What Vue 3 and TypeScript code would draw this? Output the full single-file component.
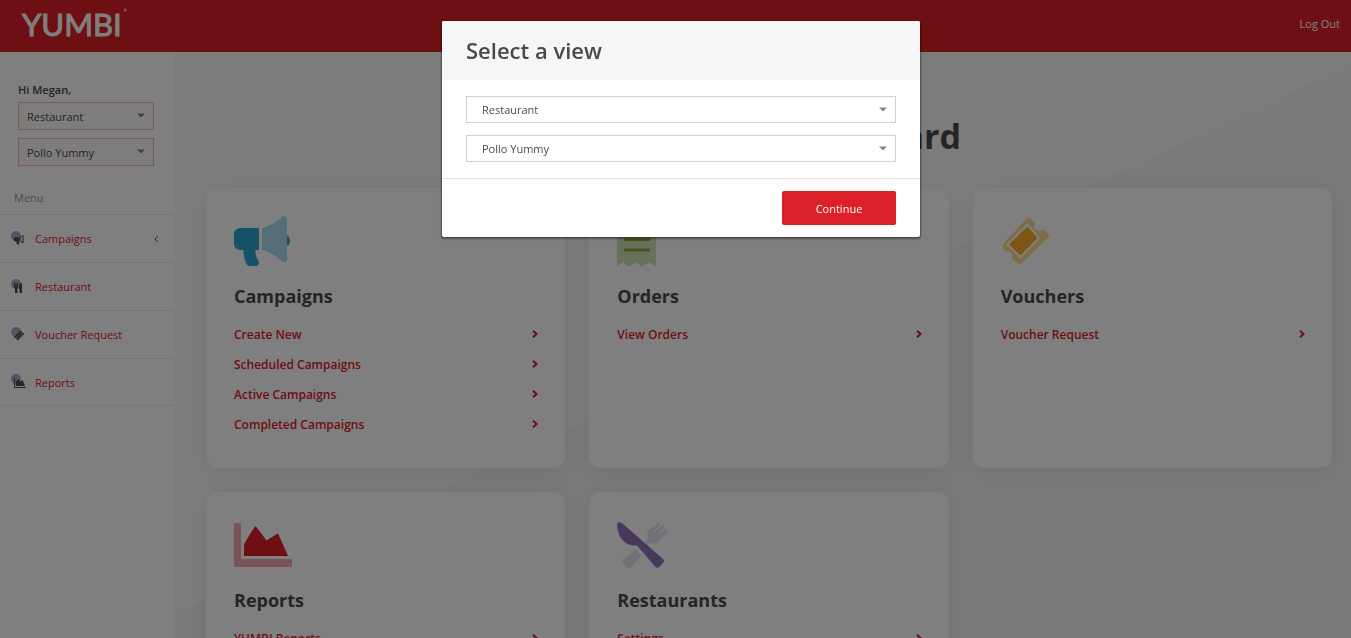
<script setup lang="ts">
import { ref } from 'vue'

interface Card {
  title: string
  icon: string
  links: string[]
}

const view = ref('Restaurant')
const store = ref('Pollo Yummy')
const open = ref(true)

const menu = [
  { label: 'Campaigns', icon: 'horn', expandable: true },
  { label: 'Restaurant', icon: 'cutlery', expandable: false },
  { label: 'Voucher Request', icon: 'ticket', expandable: false },
  { label: 'Reports', icon: 'chart', expandable: false },
]

const cards: Card[] = [
  {
    title: 'Campaigns',
    icon: 'horn',
    links: ['Create New', 'Scheduled Campaigns', 'Active Campaigns', 'Completed Campaigns'],
  },
  { title: 'Orders', icon: 'receipt', links: ['View Orders'] },
  { title: 'Vouchers', icon: 'ticket', links: ['Voucher Request'] },
  { title: 'Reports', icon: 'chart', links: ['YUMBI Reports'] },
  { title: 'Restaurants', icon: 'cutlery', links: ['Settings'] },
]
</script>

<template>
  <div class="page">
    <header class="topbar">
      <a class="logo" href="#" aria-label="YUMBI home">
        <span>YUMBI</span>
        <svg width="4" height="4" viewBox="0 0 4 4"><circle cx="2" cy="2" r="1.5" fill="#fff" fill-opacity=".6" /></svg>
      </a>
      <a class="logout" href="#">Log Out</a>
    </header>

    <div class="columns">
      <aside class="sidebar">
        <div class="profile">
          <p class="greeting">Hi Megan,</p>
          <div class="select small">
            <select v-model="view" aria-label="View">
              <option>Restaurant</option>
            </select>
            <svg class="caret" width="8" height="5" viewBox="0 0 8 5"><path d="M0 0.5h8L4 4.5z" /></svg>
          </div>
          <div class="select small">
            <select v-model="store" aria-label="Store">
              <option>Pollo Yummy</option>
            </select>
            <svg class="caret" width="8" height="5" viewBox="0 0 8 5"><path d="M0 0.5h8L4 4.5z" /></svg>
          </div>
        </div>
        <p class="menu-title">Menu</p>
        <nav class="menu">
          <a v-for="item in menu" :key="item.label" class="menu-item" href="#">
            <svg class="menu-icon" width="16" height="16" viewBox="0 0 16 16">
              <circle cx="5" cy="5" r="5" fill="#aaa4cc" />
              <g v-if="item.icon === 'horn'" fill="#4a4a4e">
                <path d="M4 6.2h4.6v4H8l.5 3H6l-.8-3H4a1 1 0 0 1-1-1v-2a1 1 0 0 1 1-1z" />
                <path d="M9 6.8l3-2.3v7.4L9 9.8z" fill="none" stroke="#4a4a4e" stroke-width="1" />
                <path d="M12.6 7.2q1.2 1 0 2z" />
              </g>
              <g v-else-if="item.icon === 'cutlery'" fill="#4a4a4e">
                <path d="M3 4h1v3h.5V4h1v3H6V4h1v4L6.400 9v5H4V9L3 8zM8 7q0-3 3-3v10H8.600v-4H8z" />
              </g>
              <g v-else-if="item.icon === 'ticket'" fill="#4a4a4e">
                <path d="M3 10l6.600-6.400 1.200 1 0 1.200 1.400.2 1 1L6.800 13.600l-1.200-1 0-1.300-1.400-.2z" />
                <path d="M5.600 10l4-4 1.600 1.500-4 4z" fill="none" stroke="#c9c4d8" stroke-width=".7" />
              </g>
              <g v-else fill="#4a4a4e">
                <path d="M3 4h1v9h11v1H3z" />
                <path d="M4.800 12V8l2.400-3 2.400 2.400 2-1.400L14 12z" />
              </g>
            </svg>
            <span>{{ item.label }}</span>
            <svg v-if="item.expandable" class="collapse" width="5" height="8" viewBox="0 0 5 8">
              <path d="M4 1L1 4l3 3" fill="none" stroke="#dc2027" />
            </svg>
          </a>
        </nav>
      </aside>

      <main class="content">
        <h1>Restaurant Dashboard</h1>
        <div class="cards">
          <section v-for="card in cards" :key="card.title" class="card">
            <svg v-if="card.icon === 'horn'" class="card-icon" width="60" height="54" viewBox="0 0 60 54">
              <path d="M52 18.500q4 1.500 4 6.500t-4 5z" fill="#2ca6d2" />
              <path d="M6 12h19v22h-3.500q-.5 6 2.500 10 2 3.500 0 5-1 1-2.500 1h-6q-2 0-3.500-2.500Q9.500 42 9.500 34H6q-6-1-6-6V18q0-5 6-6z" fill="#2ca6d2" />
              <path d="M28 12Q37 10 46 2.500 49-1 51.500.5q1.500.8 1.500 2.500v40q0 2-1.500 3-1.500.8-3.500-1Q38 36.500 28 34z" fill="#acdcea" />
            </svg>
            <svg v-else-if="card.icon === 'receipt'" class="card-icon" width="60" height="54" viewBox="0 0 60 54">
              <path d="M0 0l6.500 5L13 0l6.500 5L26 0l6.500 5L39 0v50l-1.500 0-5.500-4-6 4h-2l-5.500-4-6 4h-2L6 46l-5 4H0z" fill="#cfe0b5" />
              <path d="M7 13h26v3H7zM7 22h26v3H7zM7 32.500h26v3H7z" fill="#87a942" />
            </svg>
            <svg v-else-if="card.icon === 'ticket'" class="card-icon" width="60" height="54" viewBox="0 0 60 54">
              <path d="M3 27L25 3q2.500-2.500 5 0l4 4q-.5 2-1 4 2 4 6 3l4-.5 4 4q2 2 0 4L22 46q-3 3.500-6 1l-5-4q-.5-2 .5-4-1.500-5-7-3.500L3 33q-3-3 0-6z" fill="#ffd890" />
              <path d="M26.500 9L38 22 19.500 41 6.500 28.500z" fill="#fcaa2a" stroke="#fff" stroke-width="2" />
            </svg>
            <svg v-else-if="card.icon === 'chart'" class="card-icon" width="60" height="54" viewBox="0 0 60 54">
              <path d="M0 4q0-1 1-1h5q1 0 1 1v35h50q1 0 1 1v6q0 1-1 1H1q-1 0-1-1z" fill="#f5a6a9" />
              <path d="M10 24L20.500 7q1-1 2 0L32.500 20.500 43 14q1-.6 1.500.5L54 36H10z" fill="#dc2027" />
            </svg>
            <svg v-else class="card-icon" width="60" height="54" viewBox="0 0 60 54">
              <g fill="#e6e0f2">
                <path d="M28 22.500l3.500-4q-3-5 1-9l9-7q2-.7 2 1.200l-6.500 7q0 1.500 1.300 1l7-6.200q2-.7 2 1.300l-6 6.500q0 1.500 1.300 1.200l6.700-5.500q2-.5 1.700 1.500l-8.500 10q-4 4.500-8.500 2.500l-4 3.500z" />
                <path d="M19 29.500l5.500 6L14 47q-2.500 2-4.500 0L6 43q-1.500-2 .5-4z" />
              </g>
              <path d="M5 3L46 39q2 2 0 4l-3.500 4q-2 1.500-4 0L20 25.500Q2 26 0 5 0 1 5 3z" fill="#9171bd" />
            </svg>
            <h2>{{ card.title }}</h2>
            <a v-for="link in card.links" :key="link" class="card-link" href="#">
              <span>{{ link }}</span>
              <svg width="7" height="8" viewBox="0 0 7 8">
                <path d="M1 0.700l3.500 3.300L1 7.300" fill="none" stroke="#dc2027" stroke-width="2" />
              </svg>
            </a>
          </section>
        </div>
      </main>
    </div>

    <div v-if="open" class="overlay">
      <form class="modal" role="dialog" aria-modal="true" aria-labelledby="modal-title" @submit.prevent="open = false">
        <div class="modal-head">
          <h2 id="modal-title">Select a view</h2>
        </div>
        <div class="modal-body">
          <div class="select">
            <select v-model="view" aria-label="Select view type">
              <option>Restaurant</option>
            </select>
            <svg class="caret" width="8" height="5" viewBox="0 0 8 5"><path d="M0 0.5h8L4 4.5z" /></svg>
          </div>
          <div class="select">
            <select v-model="store" aria-label="Select store">
              <option>Pollo Yummy</option>
            </select>
            <svg class="caret" width="8" height="5" viewBox="0 0 8 5"><path d="M0 0.5h8L4 4.5z" /></svg>
          </div>
        </div>
        <div class="modal-foot">
          <button type="submit">Continue</button>
        </div>
      </form>
    </div>
  </div>
</template>

<style>
body {
  margin: 0;
}
</style>

<style scoped>
* {
  box-sizing: border-box;
}
h1,
h2,
p {
  margin: 0;
}
a {
  color: #dc2027;
  text-decoration: none;
}
.page {
  display: flex;
  flex-direction: column;
  height: 100vh;
  overflow: hidden;
  font-family: 'Open Sans', 'Noto Sans', sans-serif;
  font-size: 11px;
  color: #4a4a4a;
  background: #fff;
}
.topbar {
  flex: none;
  display: flex;
  align-items: center;
  justify-content: space-between;
  height: 52px;
  padding: 0 11px 0 22px;
  background: #dc2027;
}
.logo {
  display: flex;
  align-items: flex-start;
  gap: 1px;
  padding-bottom: 5px;
  font-family: Lato, sans-serif;
  font-size: 31px;
  line-height: 32px;
  font-weight: 400;
  -webkit-text-stroke: 1px #fff;
  color: #fff;
}
.logout {
  font-size: 11px;
  line-height: 16px;
  padding-bottom: 4px;
  color: #fff;
}
.columns {
  flex: 1;
  display: flex;
  min-height: 0;
}
.sidebar {
  flex: none;
  width: 174px;
  background: #fff;
}
.profile {
  display: flex;
  flex-direction: column;
  gap: 8px;
  padding: 30px 20px 0 18px;
}
.greeting {
  margin-bottom: -4px;
  font-size: 11px;
  line-height: 16px;
  font-weight: 600;
}
.select {
  position: relative;
}
.select select {
  display: block;
  width: 100%;
  height: 27px;
  padding: 0 15px;
  border: 1px solid #d0d0d0;
  border-radius: 0;
  appearance: none;
  background: #fff;
  font: inherit;
  color: #4a4a4a;
}
.select.small select {
  height: 28px;
  padding: 0 8px;
  border-color: #f0b4c4;
  background: #fffbf7;
}
.caret {
  position: absolute;
  top: 11px;
  right: 9px;
  fill: #7d8590;
  pointer-events: none;
}
.menu-title {
  padding: 24px 14px 8px;
  line-height: 16px;
  color: #999;
}
.menu-item {
  display: flex;
  align-items: center;
  height: 48px;
  padding: 0 15px 0 11px;
  border-top: 1px solid #ededed;
}
.menu-item:last-child {
  border-bottom: 1px solid #ededed;
}
.menu-icon {
  margin-right: 8px;
}
.collapse {
  margin-left: auto;
}
.content {
  flex: 1;
  min-width: 0;
  overflow: hidden;
  padding: 60px 19px 24px 32px;
  background: linear-gradient(155deg, #f9f9f9 calc(50% - 6px), #f4f4f4 calc(50% - 5px));
}
h1 {
  margin-bottom: 28px;
  font-size: 34px;
  line-height: 48px;
  font-weight: 700;
  text-align: center;
}
.cards {
  display: grid;
  grid-template-columns: repeat(3, minmax(0, 1fr));
  grid-auto-rows: 280px;
  gap: 24px;
}
.card {
  padding: 28px;
  border-radius: 12px;
  background: #fff;
  box-shadow: 0 4px 28px rgba(0, 0, 0, 0.07);
}
.card-icon {
  display: block;
}
.card h2 {
  margin: 14px 0 11px;
  font-size: 18px;
  line-height: 24px;
  font-weight: 700;
}
.card-link {
  display: flex;
  align-items: center;
  justify-content: space-between;
  height: 30px;
  font-size: 12px;
  font-weight: 600;
}
.card-link svg {
  margin-right: -2px;
}
.overlay {
  position: fixed;
  inset: 0;
  display: flex;
  align-items: flex-start;
  justify-content: center;
  padding: 21px 0 0 11px;
  background: rgba(0, 0, 0, 0.5);
}
.modal {
  width: 478px;
  border-radius: 2px;
  overflow: hidden;
  background: #fff;
  box-shadow: 0 1px 2px 1px rgba(0, 0, 0, 0.4);
}
.modal-head {
  padding: 13px 24px 14px;
  background: #f5f7f6;
}
.modal-head h2 {
  font-size: 22px;
  line-height: 32px;
  font-weight: 600;
}
.modal-body {
  display: flex;
  flex-direction: column;
  gap: 12px;
  padding: 16px 24px;
}
.modal-foot {
  display: flex;
  justify-content: flex-end;
  padding: 12px 24px;
  border-top: 1px solid #e3e3e3;
}
.modal-foot button {
  width: 114px;
  height: 34px;
  padding: 0;
  border: 0;
  border-radius: 2px;
  background: #dc2027;
  color: #fff;
  font: inherit;
}
</style>
